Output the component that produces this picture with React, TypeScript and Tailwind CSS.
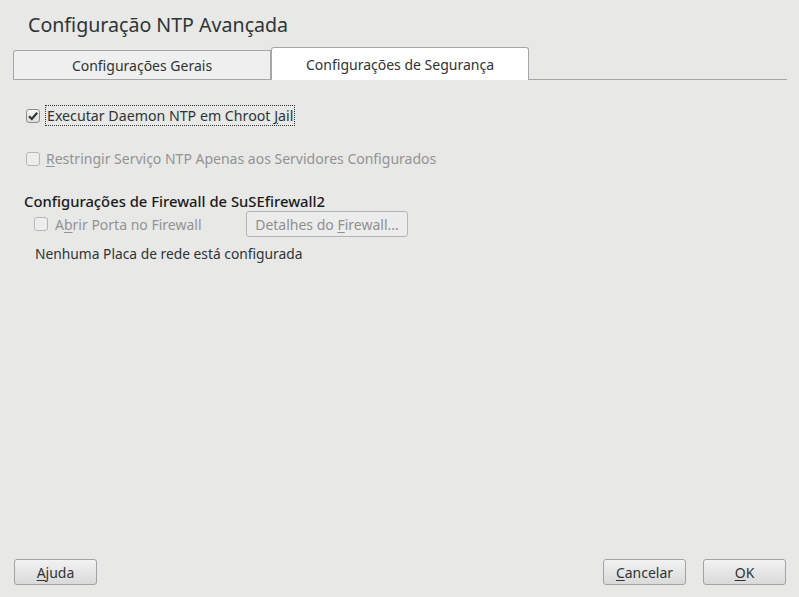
import React from 'react'

const font = { fontFamily: '"Noto Sans", "Open Sans", sans-serif' }

function Check({ checked, disabled }: { checked?: boolean; disabled?: boolean }) {
  return (
    <span
      className={`flex h-[14px] w-[14px] shrink-0 items-center justify-center rounded-[3px] border ${
        disabled ? 'border-[#b8b8b8] bg-[#ededed]' : 'border-[#8e8e8e] bg-gradient-to-b from-[#f6f6f6] to-[#dcdcdc]'
      }`}
    >
      {checked && (
        <svg width="12" height="12" viewBox="0 0 12 12">
          <path d="M2 6.2 L4.8 9 L10.2 2.8" fill="none" stroke="#2e3436" strokeWidth="2.2" />
        </svg>
      )}
    </span>
  )
}

function Btn({ children, disabled, className = '' }: { children: React.ReactNode; disabled?: boolean; className?: string }) {
  return (
    <div
      className={`flex h-[26px] items-center justify-center rounded-[3px] border text-[14px] ${
        disabled
          ? 'border-[#b5b5b5] bg-[#ececec] text-[#8f8f8f]'
          : 'border-[#a3a3a3] bg-gradient-to-b from-[#f2f2f2] to-[#d9d9d9] text-[#2e3436]'
      } ${className}`}
    >
      {children}
    </div>
  )
}

export default function App() {
  return (
    <div className="flex h-[597px] w-[799px] flex-col bg-[#e8e8e7] text-[#2e3436]" style={font}>
      <h1 className="ml-[28px] mt-[11px] text-[19.6px] leading-[28px]">Configuração NTP Avançada</h1>

      {/* tabs */}
      <div className="ml-[13px] mr-[12px] mt-[8px] flex items-end border-b border-[#a6a6a6]">
        <div className="flex h-[29px] w-[258px] items-center justify-center rounded-tl-[3px] border border-b-0 border-[#a6a6a6] bg-[#efefef] text-[14px]">
          <span>
            Confi<span className="underline underline-offset-2">g</span>urações Gerais
          </span>
        </div>
        <div className="-mb-px flex h-[33px] w-[258px] items-center justify-center rounded-t-[3px] border border-b-0 border-[#a6a6a6] bg-white text-[14px]">
          <span>
            Confi<span className="underline underline-offset-2">g</span>urações de Segurança
          </span>
        </div>
      </div>

      {/* content */}
      <div className="flex flex-1 flex-col">
        <div className="ml-[26px] mt-[25px] flex items-center gap-[5px]">
          <Check checked />
          <span className="border border-dotted border-[#2e3436] px-[1px] text-[14.2px] leading-[19px]">
            Executar Daemon NTP em Chroot <span className="underline underline-offset-2">J</span>ail
          </span>
        </div>

        <div className="ml-[26px] mt-[23px] flex items-center gap-[6px] text-[#939393]">
          <Check disabled />
          <span className="text-[14px] leading-[19px]">
            <span className="underline underline-offset-2">R</span>estringir Serviço NTP Apenas aos Servidores Configurados
          </span>
        </div>

        <div className="ml-[24px] mt-[24px] text-[14.8px] font-medium leading-[18px] text-[#1a1a1a]">
          Configurações de Firewall de SuSEfirewall2
        </div>
        <div className="ml-[34px] mt-[1px] flex items-center">
          <Check disabled />
          <span className="ml-[7px] w-[191px] text-[14px] leading-[19px] text-[#939393]">
            A<span className="underline underline-offset-2">b</span>rir Porta no Firewall
          </span>
          <Btn disabled className="w-[162px]">
            <span>
              Detalhes do <span className="underline underline-offset-2">F</span>irewall...
            </span>
          </Btn>
        </div>
        <div className="ml-[35px] mt-[7px] text-[13.8px] leading-[19px]">Nenhuma Placa de rede está configurada</div>

        <div className="flex-1" />

        <div className="mb-[12px] flex items-center pl-[14px] pr-[13px]">
          <Btn className="w-[83px]">
            <span>
              <span className="underline underline-offset-2">A</span>juda
            </span>
          </Btn>
          <div className="flex-1" />
          <Btn className="w-[83px]">
            <span>
              <span className="underline underline-offset-2">C</span>ancelar
            </span>
          </Btn>
          <Btn className="ml-[17px] w-[83px]">
            <span>
              <span className="underline underline-offset-2">O</span>K
            </span>
          </Btn>
        </div>
      </div>
    </div>
  )
}
